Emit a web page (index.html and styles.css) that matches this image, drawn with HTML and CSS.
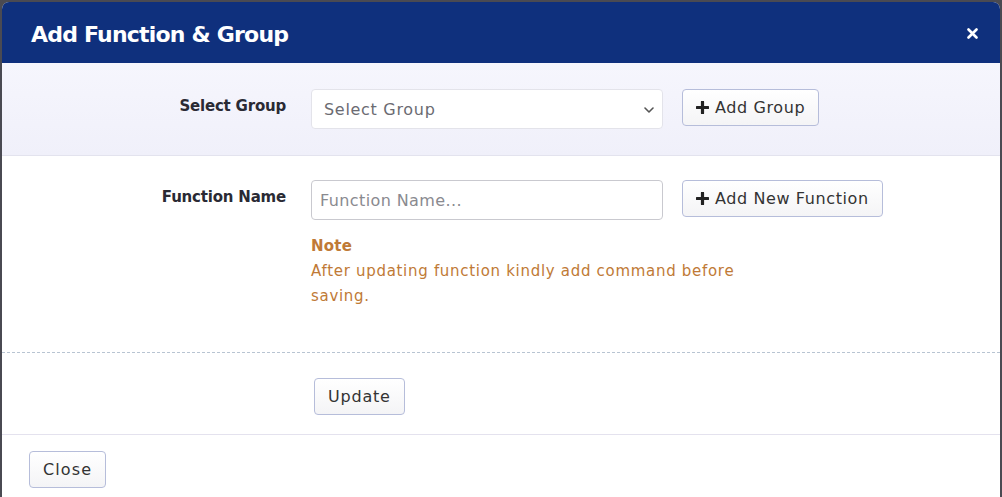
FILE: index.html
```html
<!DOCTYPE html>
<html lang="en">
<head>
<meta charset="utf-8">
<title>Add Function &amp; Group</title>
<link rel="stylesheet" href="styles.css">
</head>
<body>
<div class="modal">
  <div class="modal-header">
    <h2 class="modal-title">Add Function &amp; Group</h2>
    <button class="close-x" aria-label="Close">
      <svg width="11" height="11" viewBox="0 0 11 11"><path d="M1.5 1.5 L9.5 9.5 M9.5 1.5 L1.5 9.5" stroke="#fff" stroke-width="2.6" stroke-linecap="round"/></svg>
    </button>
  </div>
  <div class="section section-group">
    <div class="form-row">
      <label class="form-label">Select Group</label>
      <div class="field-col">
        <div class="select-box">
          <span class="select-text">Select Group</span>
          <svg class="chev" width="10" height="6" viewBox="0 0 10 6"><path d="M1 1 L5 5 L9 1" fill="none" stroke="#555" stroke-width="1.6" stroke-linecap="round" stroke-linejoin="round"/></svg>
        </div>
      </div>
      <button class="btn"><svg class="plus" width="13" height="13" viewBox="0 0 13 13"><path d="M6.5 1 V12 M1 6.5 H12" stroke="#222" stroke-width="3.2" stroke-linecap="round"/></svg>Add Group</button>
    </div>
  </div>
  <div class="section section-func">
    <div class="form-row">
      <label class="form-label">Function Name</label>
      <div class="field-col">
        <div class="input-box"><span class="placeholder">Function Name...</span></div>
        <div class="note">
          <div class="note-title">Note</div>
          <div class="note-text">After updating function kindly add command before saving.</div>
        </div>
      </div>
      <button class="btn"><svg class="plus" width="13" height="13" viewBox="0 0 13 13"><path d="M6.5 1 V12 M1 6.5 H12" stroke="#222" stroke-width="3.2" stroke-linecap="round"/></svg>Add New Function</button>
    </div>
  </div>
  <div class="section section-update">
    <button class="btn btn-update">Update</button>
  </div>
  <div class="modal-footer">
    <button class="btn btn-close">Close</button>
  </div>
</div>
</body>
</html>
```
FILE: styles.css
```css
html, body {
  margin: 0;
  padding: 0;
}
body {
  background: #4a4a52;
  font-family: "DejaVu Sans", "Open Sans", sans-serif;
  width: 1002px;
  height: 497px;
  overflow: hidden;
  padding-top: 2px;
  box-sizing: border-box;
}
.modal {
  margin: 0 2px 0 2px;
  width: 998px;
  height: 495px;
  background: #fff;
  border-radius: 7px 7px 0 0;
  overflow: hidden;
  display: flex;
  flex-direction: column;
}
.modal-header {
  height: 61px;
  background: #0f307d;
  display: flex;
  align-items: center;
  justify-content: space-between;
  padding: 0 22px 0 29px;
  flex: none;
}
.modal-title {
  margin: 3px 0 0 0;
  color: #fff;
  font-size: 22px;
  font-weight: 700;
  letter-spacing: -0.8px;
}
.close-x {
  background: none;
  border: 0;
  padding: 0;
  display: flex;
  margin-top: 1px;
}
.section {
  flex: none;
}
.section-group {
  background: linear-gradient(180deg, #f6f6fd 0%, #f0f0fa 100%);
  border-bottom: 1px solid #e3e3ee;
  padding: 26px 0 26px;
}
.section-func {
  padding: 24px 0 43px;
  border-bottom: 1px dashed #b8c4d2;
}
.form-row {
  display: flex;
  align-items: flex-start;
}
.form-label {
  flex: none;
  width: 284px;
  text-align: right;
  padding-top: 8px;
  font-size: 15px;
  font-weight: 700;
  color: #2a2a34;
  letter-spacing: -0.2px;
}
.field-col {
  flex: none;
  width: 352px;
  margin-left: 25px;
}
.select-box {
  height: 40px;
  border: 1px solid #e3e3ea;
  border-radius: 4px;
  background: #fff;
  display: flex;
  align-items: center;
  justify-content: space-between;
  padding: 0 8px 0 12px;
  box-sizing: border-box;
}
.select-text {
  font-size: 16px;
  color: #6b6b72;
  letter-spacing: 0.7px;
}
.chev {
  margin-top: 1px;
}
.input-box {
  border: 1px solid #c9c9cf;
  border-radius: 4px;
  display: flex;
  align-items: center;
  padding-left: 8px;
  box-sizing: border-box;
  height: 40px;
}
.placeholder {
  font-size: 16px;
  color: #8a8a90;
  letter-spacing: 0.4px;
}
.note {
  margin-top: 14px;
  width: 440px;
  color: #c07a36;
  font-size: 15px;
  line-height: 25px;
  letter-spacing: 0.7px;
}
.note-title {
  font-weight: 700;
  letter-spacing: 0.2px;
}
.btn {
  font-family: inherit;
  font-size: 16px;
  color: #333;
  background: linear-gradient(180deg, #ffffff 0%, #f4f4f6 100%);
  border: 1px solid #b6bdda;
  border-radius: 4px;
  height: 37px;
  padding: 0 13px;
  display: inline-flex;
  align-items: center;
  gap: 6px;
  letter-spacing: 0.6px;
}
.form-row .btn {
  flex: none;
  margin-left: 19px;
}
.plus {
  margin-top: -1px;
}
.section-update {
  padding: 25px 0 19px 312px;
  border-bottom: 1px solid #e4e2ee;
}
.btn-update {
  letter-spacing: 0.8px;
}
.modal-footer {
  padding: 16px 0 0 27px;
}
.btn-close {
  letter-spacing: 1.1px;
}
```
